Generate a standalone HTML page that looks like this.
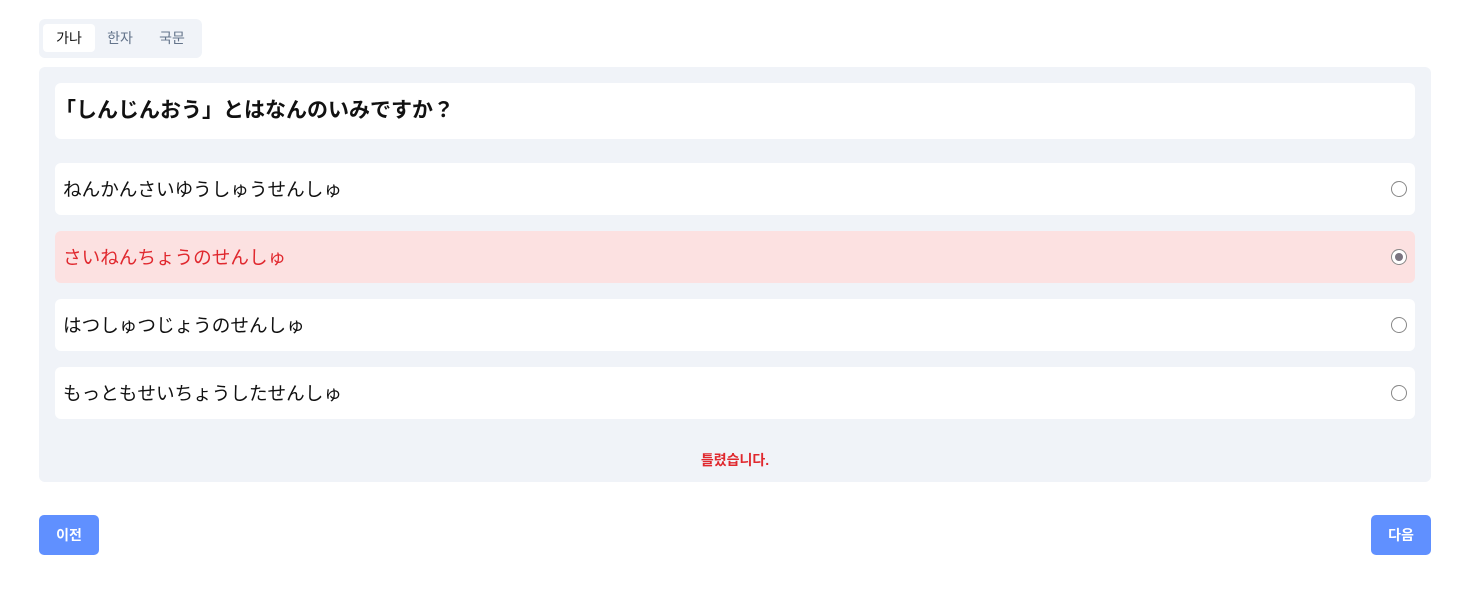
<!DOCTYPE html>
<html><head><meta charset="utf-8"><style>
*{box-sizing:border-box;margin:0;padding:0}
body{width:1468px;height:598px;background:#fff;font-family:"Liberation Sans","Noto Sans CJK JP","Noto Sans CJK KR",sans-serif;position:relative}
.tabs{position:absolute;left:39px;top:19px;width:163px;height:39px;background:#f0f3f8;border-radius:6px}
.tab{position:absolute;top:5px;height:28px;line-height:29px;font-size:14px;color:#64748b;text-align:center;width:52px}
.tab.on{background:#fff;color:#111;border-radius:4px}
.panel{position:absolute;left:39px;top:67px;width:1392px;height:415px;background:#f0f3f8;border-radius:6px}
.q{position:absolute;left:16px;top:16px;width:1360px;height:56px;background:#fff;border-radius:6px;font-size:21px;font-weight:bold;line-height:56px;padding-left:0px;color:#111}
.opt{position:absolute;left:16px;width:1360px;height:52px;background:#fff;border-radius:6px;font-size:18.6px;line-height:54px;padding-left:8px;color:#111}
.opt.bad{background:#fce1e1;color:#e0282e}
.r{position:absolute;right:8px;top:18px;width:16px;height:16px;border:1px solid #888;border-radius:50%;background:#fff}
.r.c::after{content:"";position:absolute;left:3px;top:3px;width:8px;height:8px;border-radius:50%;background:#7a7480}
.err{position:absolute;left:0;width:100%;top:383px;text-align:center;color:#e0282e;font-weight:bold;font-size:14px}
.btn{position:absolute;top:515px;width:60px;height:40px;background:#6090ff;color:#fff;border-radius:5px;font-weight:bold;font-size:14px;text-align:center;line-height:40px}
</style></head><body>
<div class="tabs"><div class="tab on" style="left:4px">가나</div><div class="tab" style="left:55px">한자</div><div class="tab" style="left:107px">국문</div></div>
<div class="panel">
<div class="q">「しんじんおう」とはなんのいみですか？</div>
<div class="opt" style="top:96px">ねんかんさいゆうしゅうせんしゅ<span class="r"></span></div>
<div class="opt bad" style="top:164px">さいねんちょうのせんしゅ<span class="r c"></span></div>
<div class="opt" style="top:232px">はつしゅつじょうのせんしゅ<span class="r"></span></div>
<div class="opt" style="top:300px">もっともせいちょうしたせんしゅ<span class="r"></span></div>
<div class="err">틀렸습니다.</div>
</div>
<div class="btn" style="left:39px">이전</div>
<div class="btn" style="left:1371px">다음</div>
</body></html>
